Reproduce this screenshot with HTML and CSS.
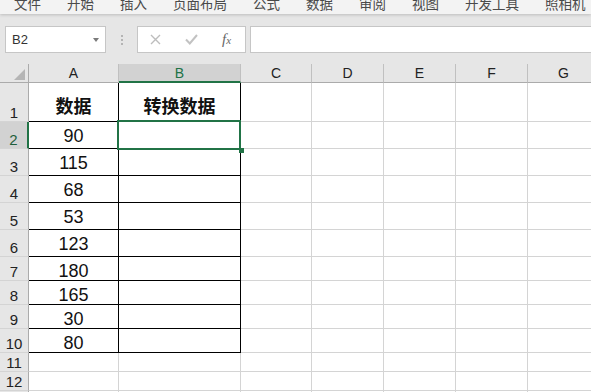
FILE: index.html
```html
<html>
  <head>
    <title>Excel - 转换数据</title>
    <link rel="stylesheet" href="styles.css">
  </head>
  <body>
  <div class="ribbon">
    <span>文件</span><span>开始</span><span>插入</span><span>页面布局</span><span>公式</span>
    <span>数据</span><span>审阅</span><span>视图</span><span>开发工具</span><span>照相机</span>
  </div>

  <div class="fbar">
    <div class="namebox"><span>B2</span><span class="drop"></span></div>
    <div class="dots">
      <svg width="2" height="10"><rect x="0" y="0" width="2" height="2" fill="#b4b4b4"/><rect x="0" y="4" width="2" height="2" fill="#b4b4b4"/><rect x="0" y="8" width="2" height="2" fill="#b4b4b4"/></svg>
    </div>
    <div class="fxbox">
      <svg class="cancel" width="11" height="11"><path d="M1 1L10 10M10 1L1 10" stroke="#bdbdbd" stroke-width="1.4" fill="none"/></svg>
      <svg class="enter" width="13" height="11"><path d="M1 5.5L4.8 9.5L12 1" stroke="#c2c2c2" stroke-width="2" fill="none"/></svg>
      <span class="fx"><i>f</i><i class="x">x</i></span>
    </div>
    <div class="input"></div>
  </div>

  <div class="sheet">
    <div class="corner"><span class="tri"></span></div>
    <div class="ch">A</div><div class="ch sel">B</div><div class="ch">C</div><div class="ch">D</div><div class="ch">E</div><div class="ch">F</div><div class="ch">G</div>

    <div class="rh">1</div><div class="c hd bx">数据</div><div class="c hd bx">转换数据</div><div class="c"></div><div class="c"></div><div class="c"></div><div class="c"></div><div class="c"></div>
    <div class="rh sel">2</div><div class="c t bx">90</div><div class="c bx cur"><div class="selbox"><span class="handle"></span></div></div><div class="c"></div><div class="c"></div><div class="c"></div><div class="c"></div><div class="c"></div>
    <div class="rh">3</div><div class="c t bx">115</div><div class="c bx"></div><div class="c"></div><div class="c"></div><div class="c"></div><div class="c"></div><div class="c"></div>
    <div class="rh">4</div><div class="c t bx">68</div><div class="c bx"></div><div class="c"></div><div class="c"></div><div class="c"></div><div class="c"></div><div class="c"></div>
    <div class="rh">5</div><div class="c t bx">53</div><div class="c bx"></div><div class="c"></div><div class="c"></div><div class="c"></div><div class="c"></div><div class="c"></div>
    <div class="rh">6</div><div class="c t bx">123</div><div class="c bx"></div><div class="c"></div><div class="c"></div><div class="c"></div><div class="c"></div><div class="c"></div>
    <div class="rh">7</div><div class="c s bx">180</div><div class="c bx"></div><div class="c"></div><div class="c"></div><div class="c"></div><div class="c"></div><div class="c"></div>
    <div class="rh">8</div><div class="c s bx">165</div><div class="c bx"></div><div class="c"></div><div class="c"></div><div class="c"></div><div class="c"></div><div class="c"></div>
    <div class="rh">9</div><div class="c s bx">30</div><div class="c bx"></div><div class="c"></div><div class="c"></div><div class="c"></div><div class="c"></div><div class="c"></div>
    <div class="rh">10</div><div class="c s bx">80</div><div class="c bx"></div><div class="c"></div><div class="c"></div><div class="c"></div><div class="c"></div><div class="c"></div>
    <div class="rh">11</div><div class="c"></div><div class="c"></div><div class="c"></div><div class="c"></div><div class="c"></div><div class="c"></div><div class="c"></div>
    <div class="rh">12</div><div class="c"></div><div class="c"></div><div class="c"></div><div class="c"></div><div class="c"></div><div class="c"></div><div class="c"></div>
    <div class="rh">13</div><div class="c"></div><div class="c"></div><div class="c"></div><div class="c"></div><div class="c"></div><div class="c"></div><div class="c"></div>
  </div>
  </body>
</html>
```

FILE: styles.css
```css
* {
  box-sizing: border-box;
}
body {
  margin: 0;
  width: 591px;
  height: 392px;
  overflow: hidden;
  background: #e6e6e6;
  font-family: "Liberation Sans", "Noto Sans CJK SC", sans-serif;
}
.ribbon {
  position: relative;
  z-index: 2;
  height: 14px;
  overflow: hidden;
  background: #f3f3f3;
  box-shadow: 0 1px 3px rgba(0, 0, 0, 0.18);
  display: flex;
  gap: 26px;
  padding-left: 14px;
}
.ribbon span {
  font-family: "Noto Sans CJK SC", sans-serif;
  font-size: 13.5px;
  line-height: 14px;
  margin-top: -4px;
  color: #4a4a4a;
  white-space: nowrap;
}
.fbar {
  height: 50px;
  display: flex;
  align-items: flex-start;
  padding: 12px 0 0 5px;
}
.namebox {
  width: 101px;
  height: 27px;
  background: #fff;
  border: 1px solid #c6c6c6;
  display: flex;
  align-items: center;
  justify-content: space-between;
  padding: 0 6px 0 6px;
  font-size: 13px;
  color: #333;
}
.drop {
  width: 0;
  height: 0;
  border-left: 3.5px solid transparent;
  border-right: 3.5px solid transparent;
  border-top: 4px solid #7a7a7a;
}
.dots {
  width: 31px;
  height: 27px;
  display: flex;
  align-items: center;
  padding-left: 15px;
}
.fxbox {
  width: 109px;
  height: 27px;
  background: #fff;
  border: 1px solid #c6c6c6;
  display: flex;
  align-items: center;
  padding-left: 12px;
}
.enter {
  margin-left: 24px;
}
.fx {
  margin-left: 24px;
  font-family: "Liberation Serif", serif;
  color: #666;
}
.fx i {
  font-size: 15px;
}
.fx .x {
  font-size: 11px;
}
.input {
  flex: 1;
  margin-left: 4px;
  height: 27px;
  background: #fff;
  border: 1px solid #c6c6c6;
  border-right: none;
}
.sheet {
  display: grid;
  width: 600px;
  grid-template-columns: 29px 90px 122px 71px 72px 72px 72px 72px;
  grid-template-rows: 19px 39px repeat(5, 27px) repeat(4, 24px) 19px 19px 19px;
}
.corner {
  background: #e6e6e6;
  border-right: 1px solid #ababab;
  border-bottom: 1px solid #ababab;
  display: flex;
  justify-content: flex-end;
  align-items: flex-end;
  padding: 0 3px 2px 0;
}
.tri {
  width: 11px;
  height: 11px;
  background: #b5b5b5;
  clip-path: polygon(100% 0, 100% 100%, 0 100%);
}
.ch {
  background: #e6e6e6;
  border-right: 1px solid #c0c0c0;
  border-bottom: 1px solid #ababab;
  text-align: center;
  font-size: 14px;
  line-height: 18px;
  color: #222;
}
.ch.sel {
  background: #d2d2d2;
  color: #217346;
  border-bottom: 2px solid #217346;
}
.rh {
  background: #e6e6e6;
  border-right: 1px solid #ababab;
  border-bottom: 1px solid #d4d4d4;
  display: flex;
  justify-content: center;
  align-items: flex-end;
  padding-bottom: 1px;
  font-size: 15px;
  line-height: 15px;
  color: #222;
}
.rh.sel {
  background: #d2d2d2;
  border-right: 2px solid #217346;
  color: #1f5e3b;
}
.c {
  background: #fff;
  border-right: 1px solid #d4d4d4;
  border-bottom: 1px solid #d4d4d4;
  display: flex;
  justify-content: center;
  align-items: flex-end;
  font-size: 18px;
  line-height: 18px;
  color: #111;
}
.c.bx {
  border-right-color: #000;
  border-bottom-color: #000;
}
.c.hd {
  font-family: "Noto Sans CJK SC", sans-serif;
  font-weight: bold;
  padding-bottom: 7px;
}
.c.t {
  padding-bottom: 3px;
}
.c.s {
  padding-bottom: 0;
}
.cur {
  position: relative;
}
.selbox {
  position: absolute;
  z-index: 1;
  left: -2px;
  top: -2px;
  right: -1px;
  bottom: -2px;
  border: 2px solid #217346;
}
.handle {
  position: absolute;
  right: -5px;
  bottom: -5px;
  width: 5px;
  height: 5px;
  background: #217346;
}
```
